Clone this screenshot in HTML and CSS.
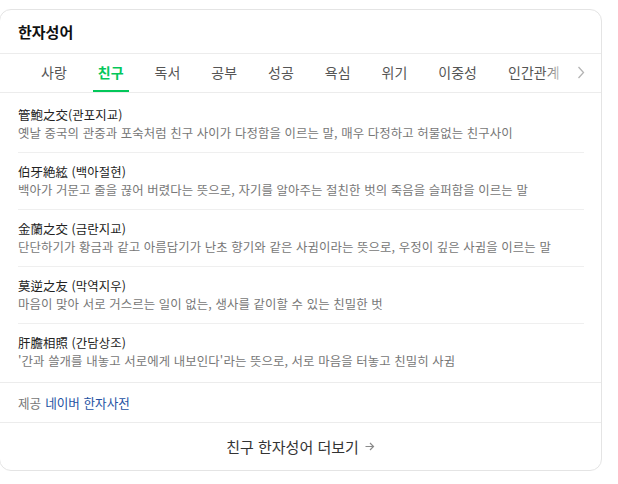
FILE: index.html
```html
<!DOCTYPE html>
<html lang="ko">
<head>
    <meta charset="UTF-8">
    <meta name="viewport" content="width=device-width, initial-scale=1.0">
    <title>한자성어</title>
    <link rel="stylesheet" href="styles.css">
</head>
<body>
    <div class="card">
        <div class="card-head">
            <h2>한자성어</h2>
        </div>

        <div class="tabs">
            <ul class="tab-list">
                <li class="tab">사랑</li>
                <li class="tab active">친구</li>
                <li class="tab">독서</li>
                <li class="tab">공부</li>
                <li class="tab">성공</li>
                <li class="tab">욕심</li>
                <li class="tab">위기</li>
                <li class="tab">이중성</li>
                <li class="tab">인간관계</li>
            </ul>
            <div class="tab-next">
                <svg width="8" height="13" viewBox="0 0 8 13">
                    <polyline points="1.5,1 6.5,6.5 1.5,12" fill="none" stroke="#b4b4b4" stroke-width="1.3"/>
                </svg>
            </div>
        </div>

        <ul class="idiom-list">
            <li class="idiom">
                <strong class="idiom-title">管鮑之交(관포지교)</strong>
                <p class="idiom-desc">옛날 중국의 관중과 포숙처럼 친구 사이가 다정함을 이르는 말, 매우 다정하고 허물없는 친구사이</p>
            </li>
            <li class="idiom">
                <strong class="idiom-title">伯牙絶絃 (백아절현)</strong>
                <p class="idiom-desc">백아가 거문고 줄을 끊어 버렸다는 뜻으로, 자기를 알아주는 절친한 벗의 죽음을 슬퍼함을 이르는 말</p>
            </li>
            <li class="idiom">
                <strong class="idiom-title">金蘭之交 (금란지교)</strong>
                <p class="idiom-desc">단단하기가 황금과 같고 아름답기가 난초 향기와 같은 사귐이라는 뜻으로, 우정이 깊은 사귐을 이르는 말</p>
            </li>
            <li class="idiom">
                <strong class="idiom-title">莫逆之友 (막역지우)</strong>
                <p class="idiom-desc">마음이 맞아 서로 거스르는 일이 없는, 생사를 같이할 수 있는 친밀한 벗</p>
            </li>
            <li class="idiom">
                <strong class="idiom-title">肝膽相照 (간담상조)</strong>
                <p class="idiom-desc">'간과 쓸개를 내놓고 서로에게 내보인다'라는 뜻으로, 서로 마음을 터놓고 친밀히 사귐</p>
            </li>
        </ul>

        <div class="source">
            제공 <a href="#">네이버 한자사전</a>
        </div>

        <a class="more" href="#">
            친구 한자성어 더보기
            <svg width="10" height="9" viewBox="0 0 10 9">
                <path d="M0.5 4.5H8.5M5 1L8.5 4.5L5 8" fill="none" stroke="#8a8a8a" stroke-width="1.2"/>
            </svg>
        </a>
    </div>
</body>
</html>
```

FILE: styles.css
```css
* {
    margin: 0;
    padding: 0;
    box-sizing: border-box;
}

body {
    background: #fff;
    font-family: 'Noto Sans CJK KR', 'Noto Sans', sans-serif;
    color: #222;
}

ul {
    list-style: none;
}

a {
    text-decoration: none;
}

.card {
    width: 603px;
    margin: 9px 0 0 -1px;
    border: 1px solid #e4e4e4;
    border-radius: 12px;
    overflow: hidden;
}

.card-head {
    height: 44px;
    padding: 0 18px;
    display: flex;
    align-items: center;
    border-bottom: 1px solid #ececec;
}

.card-head h2 {
    font-size: 15px;
    font-weight: 700;
    color: #111;
}

.tabs {
    position: relative;
    border-bottom: 1px solid #ececec;
}

.tab-list {
    display: flex;
    gap: 21px;
    padding-left: 36px;
    white-space: nowrap;
    overflow: hidden;
}

.tab {
    height: 38px;
    padding: 0 5px;
    font-size: 14px;
    line-height: 36px;
    color: #555;
    border-bottom: 2px solid transparent;
}

.tab.active {
    color: #03c75a;
    font-weight: 700;
    border-bottom-color: #03c75a;
}

.tab-next {
    position: absolute;
    top: 0;
    right: 0;
    width: 58px;
    height: 37px;
    display: flex;
    align-items: center;
    justify-content: flex-end;
    padding-right: 16px;
    background: linear-gradient(to right, rgba(255, 255, 255, 0), #fff 45%);
}

.idiom-list {
    padding: 3px 0 2px;
}

.idiom {
    margin: 0 17px 0 18px;
    padding: 10px 0;
    border-bottom: 1px solid #efefef;
    font-size: 12.4px;
    line-height: 18px;
    letter-spacing: 0.1px;
}

.idiom:last-child {
    border-bottom: none;
}

.idiom-title {
    display: block;
    font-weight: 400;
    color: #222;
}

.idiom-desc {
    color: #777;
    white-space: nowrap;
}

.source {
    height: 41px;
    padding: 0 18px;
    display: flex;
    align-items: center;
    gap: 4px;
    font-size: 12.6px;
    color: #777;
    border-top: 1px solid #ececec;
    border-bottom: 1px solid #ececec;
}

.source a {
    color: #2552a3;
}

.more {
    height: 47px;
    display: flex;
    align-items: center;
    justify-content: center;
    gap: 6px;
    font-size: 15px;
    color: #333;
}
```
